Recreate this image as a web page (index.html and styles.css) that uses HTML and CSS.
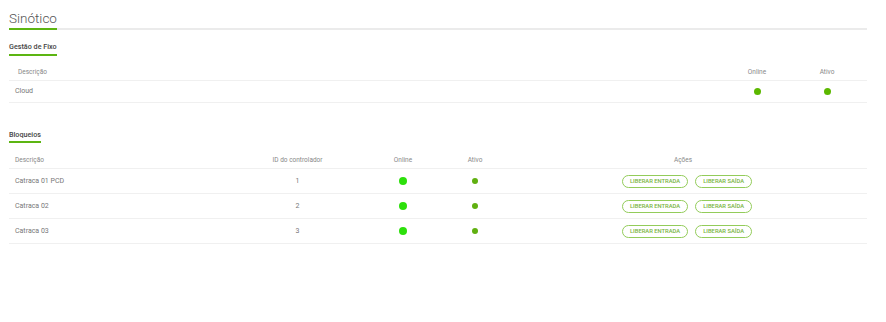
FILE: index.html
```html
<!DOCTYPE html>
<html lang="pt-BR">
<head>
    <meta charset="UTF-8">
    <meta name="viewport" content="width=device-width, initial-scale=1.0">
    <title>Sinótico</title>
    <link rel="stylesheet" href="styles.css">
</head>
<body>
    <div class="page-header">
        <h1 class="page-title">Sinótico</h1>
    </div>

    <!-- Gestao de fixo -->
    <div class="section">
        <div class="section-head"><span class="section-title">Gestão de Fixo</span></div>
        <div class="table table-fixo">
            <div class="row head-row">
                <div class="cell cell-first">Descrição</div>
                <div class="cell center">Online</div>
                <div class="cell center">Ativo</div>
            </div>
            <div class="row data-row">
                <div class="cell">Cloud</div>
                <div class="cell center"><span class="dot"></span></div>
                <div class="cell center"><span class="dot"></span></div>
            </div>
        </div>
    </div>

    <!-- Bloqueios -->
    <div class="section section-block">
        <div class="section-head"><span class="section-title">Bloqueios</span></div>
        <div class="table table-block">
            <div class="row head-row">
                <div class="cell">Descrição</div>
                <div class="cell center">ID do controlador</div>
                <div class="cell center">Online</div>
                <div class="cell center">Ativo</div>
                <div class="cell center">Ações</div>
            </div>
            <div class="row data-row">
                <div class="cell">Catraca 01 PCD</div>
                <div class="cell center">1</div>
                <div class="cell center"><span class="dot dot-online"></span></div>
                <div class="cell center"><span class="dot dot-small"></span></div>
                <div class="cell actions">
                    <button class="btn-outline">Liberar entrada</button>
                    <button class="btn-outline">Liberar saída</button>
                </div>
            </div>
            <div class="row data-row">
                <div class="cell">Catraca 02</div>
                <div class="cell center">2</div>
                <div class="cell center"><span class="dot dot-online"></span></div>
                <div class="cell center"><span class="dot dot-small"></span></div>
                <div class="cell actions">
                    <button class="btn-outline">Liberar entrada</button>
                    <button class="btn-outline">Liberar saída</button>
                </div>
            </div>
            <div class="row data-row">
                <div class="cell">Catraca 03</div>
                <div class="cell center">3</div>
                <div class="cell center"><span class="dot dot-online"></span></div>
                <div class="cell center"><span class="dot dot-small"></span></div>
                <div class="cell actions">
                    <button class="btn-outline">Liberar entrada</button>
                    <button class="btn-outline">Liberar saída</button>
                </div>
            </div>
        </div>
    </div>
</body>
</html>
```

FILE: styles.css
```css
/* Sinotico page */
body {
    margin: 0;
    padding: 0 19px 0 9px;
    font-family: Roboto, "Liberation Sans", Arial, sans-serif;
    background-color: #fff;
    color: #777;
}
.page-header {
    display: flex;
    padding-top: 9px;
    border-bottom: 2px solid #ebebeb;
}
.page-title {
    margin: 0 0 -2px 0;
    font-size: 13.5px;
    line-height: 19px;
    font-weight: 300;
    color: #555;
    border-bottom: 2px solid #5cb512;
}
.section-head {
    display: flex;
    margin-top: 12px;
}
.section-title {
    font-size: 7.2px;
    line-height: 10px;
    font-weight: 500;
    color: #444;
    padding-bottom: 1.5px;
    border-bottom: 2px solid #5cb512;
}
.section-block .section-head {
    margin-top: 27px;
}
.table {
    margin-top: 8px;
}
.table-block {
    margin-top: 9px;
}
.row {
    display: grid;
    align-items: center;
    border-bottom: 1px solid #f0f0f0;
}
.table-fixo .row {
    grid-template-columns: 1fr 70px 70px;
    padding-right: 5px;
}
.table-block .row {
    grid-template-columns: 231px 115px 96px 48px 1fr;
}
.head-row {
    height: 16px;
    font-size: 6.5px;
    color: #888;
}
.table-fixo .data-row {
    height: 21px;
}
.table-block .data-row {
    height: 24px;
}
.data-row {
    font-size: 7px;
    color: #777;
}
.cell {
    padding-left: 6px;
}
.cell-first {
    padding-left: 9px;
}
.center {
    padding-left: 0;
    text-align: center;
    display: flex;
    justify-content: center;
    align-items: center;
}
.dot {
    display: inline-block;
    width: 7px;
    height: 7px;
    border-radius: 50%;
    background-color: #5cb800;
}
.dot-online {
    width: 8px;
    height: 8px;
    background-color: #2de00b;
}
.dot-small {
    width: 6px;
    height: 6px;
    background-color: #60b010;
}
.actions {
    display: flex;
    justify-content: center;
    gap: 7px;
    padding-left: 8px;
}
.btn-outline {
    height: 13px;
    padding: 0 7px;
    border: 1px solid #93cc5a;
    border-radius: 7px;
    background-color: #fff;
    color: #78b43c;
    font-family: Roboto, "Liberation Sans", Arial, sans-serif;
    font-size: 5.8px;
    font-weight: 500;
    text-transform: uppercase;
    line-height: 11px;
    cursor: pointer;
}
```
